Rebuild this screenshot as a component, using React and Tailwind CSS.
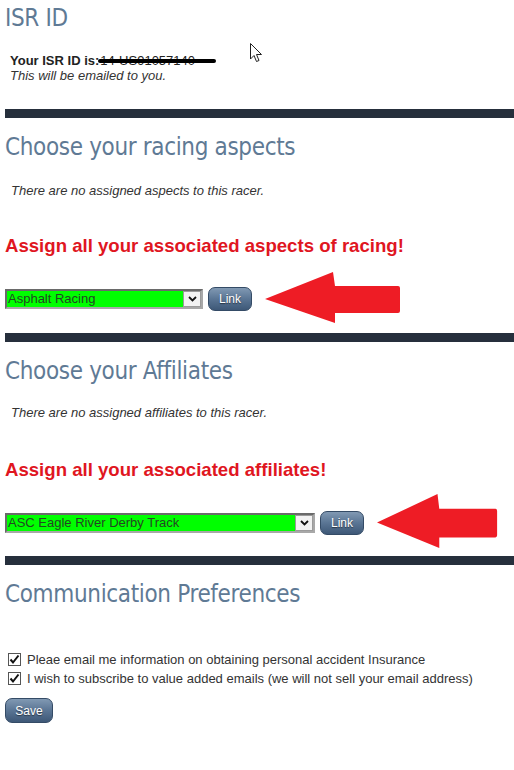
import React from "react";

const headingCls =
  "text-[24px] leading-[30px] tracking-[-0.35px] text-[#5f7a95] [font-family:'DejaVu_Sans_Condensed','DejaVu_Sans',sans-serif] [font-stretch:condensed]";
const bodyFont = "[font-family:'Liberation_Sans',Arial,sans-serif]";

function Arrow({ className }) {
  return (
    <svg className={className} viewBox="0 0 136 51" preserveAspectRatio="none">
      <path
        d="M0 27 L68 0 L70 14 L133 14 Q135 14 135 16 L135 39 Q135 41 133 41 L70 41 L70 51 Z"
        fill="#ee1c25"
      />
    </svg>
  );
}

function Chevron() {
  return (
    <svg width="9" height="6" viewBox="0 0 9 6">
      <path d="M1 1 L4.5 4.5 L8 1" fill="none" stroke="#111" strokeWidth="1.8" />
    </svg>
  );
}

function FakeSelect({ width, label }) {
  return (
    <div
      className={`flex h-[20px] items-stretch border-[2px] border-t-[#6a6a6a] border-l-[#6a6a6a] border-r-[#a8a8a8] border-b-[#a8a8a8] bg-[#00ff00] ${bodyFont}`}
      style={{ width }}
    >
      <div className="flex-1 pl-[1px] text-[13px] leading-[16px] text-[#234723]">{label}</div>
      <div className="flex w-[18px] items-center justify-center border border-[#9a9a9a] bg-[#f2f2f2]">
        <Chevron />
      </div>
    </div>
  );
}

function BlueButton({ children, w }) {
  return (
    <div
      className={`flex h-[24px] items-center justify-center rounded-[7px] border border-[#344b66] bg-gradient-to-b from-[#8199b3] via-[#5a7594] to-[#3e5877] text-[12px] text-white [text-shadow:0_1px_1px_rgba(0,0,0,0.5)] ${bodyFont} ${w}`}
    >
      {children}
    </div>
  );
}

function Check() {
  return (
    <div className="flex h-[13px] w-[13px] items-center justify-center border border-[#555] bg-white">
      <svg width="11" height="11" viewBox="0 0 11 11">
        <path d="M1.5 5.5 L4 8.5 L9.5 1.5" fill="none" stroke="#111" strokeWidth="2" />
      </svg>
    </div>
  );
}

function Bar({ mt }) {
  return <div className={`h-[9px] bg-[#262f3c] ${mt}`} />;
}

export default function App() {
  return (
    <div className="relative min-h-[770px] w-[514px] bg-white pl-[5px] text-[#333]">
      {/* cursor */}
      <svg className="absolute left-[250px] top-[43px]" width="13" height="20" viewBox="0 0 13 20">
        <path
          d="M0.5 0.5 L0.5 16 L4 12.5 L6.5 18.5 L9 17.5 L6.5 11.5 L11.5 11.5 Z"
          fill="white"
          stroke="#222"
          strokeWidth="1"
        />
      </svg>

      <h1 className={`${headingCls} pt-[3px]`}>ISR ID</h1>

      <div className={`mt-[20px] pl-[5px] text-[13px] leading-[15px] ${bodyFont}`}>
        <div className="flex items-center">
          <span className="font-bold text-[#222]">Your ISR ID is:</span>
          <span className="relative ml-[1px] text-[#222]">
            14-US91057140
            <span className="absolute left-[-2px] top-[6px] h-[4px] w-[118px] rounded-full bg-black" />
          </span>
        </div>
        <div className="italic text-[#333]">This will be emailed to you.</div>
      </div>

      <Bar mt="mt-[26px]" />

      <h2 className={`${headingCls} mt-[14px]`}>Choose your racing aspects</h2>
      <div className={`mt-[21px] pl-[6px] text-[13px] italic leading-[15px] ${bodyFont}`}>
        There are no assigned aspects to this racer.
      </div>

      <div className={`mt-[37px] text-[18.6px] font-bold leading-[22px] text-[#e0161f] ${bodyFont}`}>
        Assign all your associated aspects of racing!
      </div>

      <div className="relative mt-[30px] flex h-[24px] items-center gap-[5px]">
        <FakeSelect width={198} label="Asphalt Racing" />
        <BlueButton w="w-[44px]">Link</BlueButton>
        <Arrow className="absolute left-[260px] top-[-15px] h-[51px] w-[136px]" />
      </div>

      <Bar mt="mt-[22px]" />

      <h2 className={`${headingCls} mt-[14px]`}>Choose your Affiliates</h2>
      <div className={`mt-[19px] pl-[6px] text-[13px] italic leading-[15px] ${bodyFont}`}>
        There are no assigned affiliates to this racer.
      </div>

      <div className={`mt-[39px] text-[18.6px] font-bold leading-[22px] text-[#e0161f] ${bodyFont}`}>
        Assign all your associated affiliates!
      </div>

      <div className="relative mt-[30px] flex h-[24px] items-center gap-[5px]">
        <FakeSelect width={310} label="ASC Eagle River Derby Track" />
        <BlueButton w="w-[44px]">Link</BlueButton>
        <Arrow className="absolute left-[372px] top-[-17px] h-[54px] w-[121px]" />
      </div>

      <Bar mt="mt-[21px]" />

      <h2 className={`${headingCls} mt-[14px]`}>Communication Preferences</h2>

      <div className={`mt-[44px] flex flex-col gap-[6px] pl-[3px] text-[13px] leading-[13px] ${bodyFont}`}>
        <div className="flex items-center gap-[6px]">
          <Check />
          <span>Pleae email me information on obtaining personal accident Insurance</span>
        </div>
        <div className="flex items-center gap-[6px]">
          <Check />
          <span>I wish to subscribe to value added emails (we will not sell your email address)</span>
        </div>
      </div>

      <div className="mt-[13px] flex">
        <BlueButton w="w-[48px] h-[25px]">Save</BlueButton>
      </div>
    </div>
  );
}
